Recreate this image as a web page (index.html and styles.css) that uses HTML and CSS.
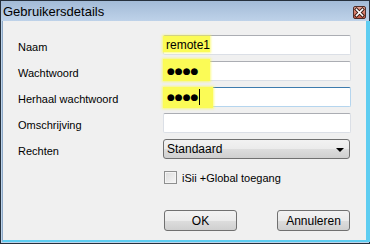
FILE: index.html
```html
<!DOCTYPE html>
<html lang="nl">

<head>
    <meta charset="UTF-8">
    <title>Gebruikersdetails</title>
    <link rel="stylesheet" href="styles.css">
</head>

<body>
    <div class="window">
        <div class="titlebar">
            <span class="title">Gebruikersdetails</span>
            <span class="close-btn">
                <svg width="11" height="11" viewBox="0 0 11 11">
                    <path d="M2.5 2.5 L8.5 8.5 M8.5 2.5 L2.5 8.5" stroke="#3a1a14" stroke-width="3.4" stroke-linecap="square" />
                    <path d="M2.5 2.5 L8.5 8.5 M8.5 2.5 L2.5 8.5" stroke="#fff" stroke-width="1.6" stroke-linecap="square" />
                </svg>
            </span>
        </div>

        <div class="client">
            <div class="form">
                <div class="row">
                    <label>Naam</label>
                    <div class="field">
                        <span class="hl hl-name"></span>
                        <span class="value">remote1</span>
                    </div>
                </div>
                <div class="row">
                    <label>Wachtwoord</label>
                    <div class="field">
                        <span class="hl hl-pass"></span>
                        <span class="value dots">●●●●</span>
                    </div>
                </div>
                <div class="row">
                    <label>Herhaal wachtwoord</label>
                    <div class="field focused">
                        <span class="hl hl-repeat"></span>
                        <span class="value dots">●●●●</span><span class="caret"></span>
                    </div>
                </div>
                <div class="row">
                    <label>Omschrijving</label>
                    <div class="field"></div>
                </div>
                <div class="row">
                    <label>Rechten</label>
                    <div class="select">
                        <span>Standaard</span>
                        <span class="arrow"></span>
                    </div>
                </div>
            </div>

            <div class="check-row">
                <span class="checkbox"></span>
                <span>iSii +Global toegang</span>
            </div>

            <div class="buttons">
                <button class="btn">OK</button>
                <button class="btn">Annuleren</button>
            </div>
        </div>
    </div>
</body>

</html>
```

FILE: styles.css
```css
/* Reset */
* {
    margin: 0;
    padding: 0;
    box-sizing: border-box;
}

body {
    font-family: 'Liberation Sans', Arial, sans-serif;
    font-size: 11px;
    color: #000;
    background: #fff;
}

/* Window frame */
.window {
    width: 370px;
    height: 244px;
    border: 1px solid #26303c;
    background: #bcd3ea;
    display: flex;
    flex-direction: column;
}

.titlebar {
    height: 20px;
    display: flex;
    align-items: center;
    justify-content: space-between;
    padding: 0 3px 0 2px;
    background: linear-gradient(#a3bbd7, #bed2e9);
}

.title {
    font-family: 'Liberation Sans', Arial, sans-serif;
    font-size: 13px;
    color: #000;
    padding-top: 1px;
}

.close-btn {
    width: 13px;
    height: 13px;
    margin-top: 2px;
    border: 1px solid #4e2d28;
    border-radius: 2px;
    background: linear-gradient(#e7a595, #c85a44);
    display: flex;
    align-items: center;
    justify-content: center;
}

.close-btn svg {
    display: block;
}

/* Client area */
.client {
    flex: 1;
    margin: 0 3px 1px 1px;
    background: #f0f0f0;
    border-left: 1px solid #8ea8c6;
    border-bottom: 2px solid #5ecdf1;
    box-shadow: 4px 0 0 #5ecdf1;
    padding: 14px 0 0 15px;
}

.form {
    display: flex;
    flex-direction: column;
    gap: 6px;
}

.row {
    display: flex;
    align-items: center;
    height: 20px;
}

.row label {
    width: 145px;
    padding-top: 4px;
}

/* Text fields */
.field {
    position: relative;
    width: 188px;
    height: 20px;
    background: #fff;
    border: 1px solid #dbdfe6;
    border-top-color: #abadb3;
    border-radius: 2px;
    display: flex;
    align-items: center;
    padding-left: 2px;
    font-size: 12px;
}

.field.focused {
    border-color: #b5d5ee;
    border-top-color: #3d7bad;
}

.value {
    position: relative;
}

.dots {
    font-family: 'DejaVu Sans', sans-serif;
    font-size: 9px;
    padding-left: 1px;
}

.caret {
    position: relative;
    width: 1px;
    height: 16px;
    background: #000;
    margin-left: 1px;
}

/* yellow marker highlights over the fields */
.hl {
    position: absolute;
    background: #fbfb56;
    box-shadow: 0 0 2px 1px rgba(251, 251, 86, 0.7);
}

.hl-name {
    left: -1px;
    top: 0;
    width: 47px;
    height: 16px;
}

.hl-pass {
    left: -1px;
    top: -3px;
    width: 47px;
    height: 22px;
}

.hl-repeat {
    left: -1px;
    top: -1px;
    width: 50px;
    height: 21px;
}

/* Dropdown */
.select {
    width: 187px;
    height: 20px;
    border: 1px solid #707070;
    border-radius: 3px;
    background: linear-gradient(#f2f2f2 0%, #ebebeb 50%, #dddddd 51%, #cfcfcf 100%);
    display: flex;
    align-items: center;
    justify-content: space-between;
    padding: 0 5px 0 3px;
    font-size: 12px;
}

.arrow {
    width: 0;
    height: 0;
    border-left: 4px solid transparent;
    border-right: 4px solid transparent;
    border-top: 4px solid #000;
    margin-top: 1px;
}

/* Checkbox */
.check-row {
    display: flex;
    align-items: center;
    gap: 5px;
    margin: 12px 0 0 146px;
    height: 13px;
}

.checkbox {
    width: 13px;
    height: 13px;
    border: 1px solid #8e8f8f;
    background: linear-gradient(135deg, #dcdcdc, #f6f6f6);
    box-shadow: inset 0 0 0 1px #f4f4f4;
}

/* Buttons */
.buttons {
    display: flex;
    justify-content: space-between;
    width: 186px;
    margin: 26px 0 0 146px;
}

.btn {
    width: 73px;
    height: 21px;
    border: 1px solid #707070;
    border-radius: 3px;
    background: linear-gradient(#f2f2f2 0%, #ebebeb 50%, #dddddd 51%, #cfcfcf 100%);
    font-family: 'Liberation Sans', Arial, sans-serif;
    font-size: 12px;
    color: #000;
}
```
